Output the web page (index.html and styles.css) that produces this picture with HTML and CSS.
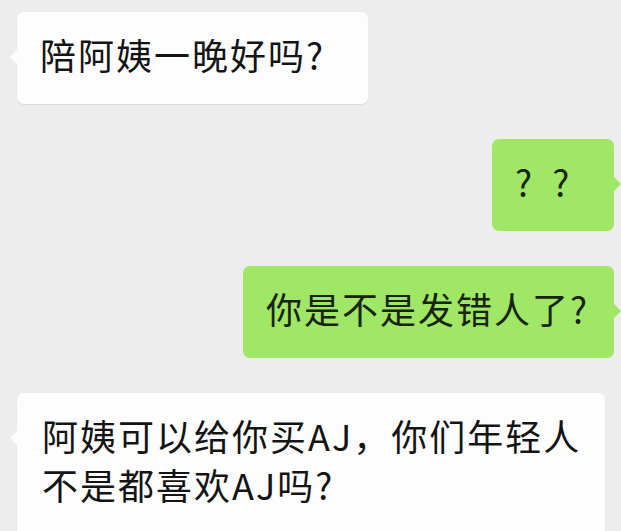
FILE: index.html
```html
<!DOCTYPE html>
<html lang="zh-CN">
<head>
    <meta charset="UTF-8">
    <meta name="viewport" content="width=device-width, initial-scale=1.0">
    <title>聊天记录</title>
    <link rel="stylesheet" href="styles.css">
</head>
<body>
<div class="chat">
    <div class="row left">
        <div class="bubble white msg-ask">陪阿姨一晚好吗?</div>
    </div>
    <div class="row right">
        <div class="bubble green msg-huh">? ?</div>
    </div>
    <div class="row right">
        <div class="bubble green msg-wrong">你是不是发错人了?</div>
    </div>
    <div class="row left">
        <div class="bubble white msg-aj">阿姨可以给你买AJ，你们年轻人不是都喜欢AJ吗?</div>
    </div>
</div>
</body>
</html>
```

FILE: styles.css
```css
body {
    margin: 0;
    padding: 0;
    background-color: #ededed;
    font-family: "Noto Sans CJK SC", "Noto Sans", sans-serif;
    overflow: hidden;
}
.chat {
    display: flex;
    flex-direction: column;
    gap: 35px;
    padding-top: 12px;
}
.row {
    display: flex;
}
.row.left {
    justify-content: flex-start;
    padding-left: 17px;
}
.row.right {
    justify-content: flex-end;
    padding-right: 7px;
}
.bubble {
    position: relative;
    box-sizing: border-box;
    padding: 18px 22px 25px 23px;
    border-radius: 7px;
    font-size: 36px;
    line-height: 49px;
    letter-spacing: 2px;
    color: #141414;
}
.bubble.white {
    background-color: #fdfdfd;
    box-shadow: 0 1px 1px rgba(0, 0, 0, 0.08);
}
.bubble.green {
    background-color: #9fe765;
    color: #17240e;
}
/* little tails on the side of each bubble */
.bubble::after {
    content: "";
    position: absolute;
    top: 38px;
    width: 0;
    height: 0;
    border-top: 7px solid transparent;
    border-bottom: 7px solid transparent;
}
.bubble.white::after {
    left: -7px;
    border-right: 7px solid #fdfdfd;
}
.bubble.green::after {
    right: -7px;
    border-left: 7px solid #9fe765;
}
.msg-ask {
    width: 351px;
}
.msg-huh {
    width: 122px;
    word-spacing: 8px;
}
.msg-wrong {
    width: 371px;
}
.msg-aj {
    width: 588px;
    padding-left: 25px;
    padding-right: 20px;
    min-height: 160px;
}
```
